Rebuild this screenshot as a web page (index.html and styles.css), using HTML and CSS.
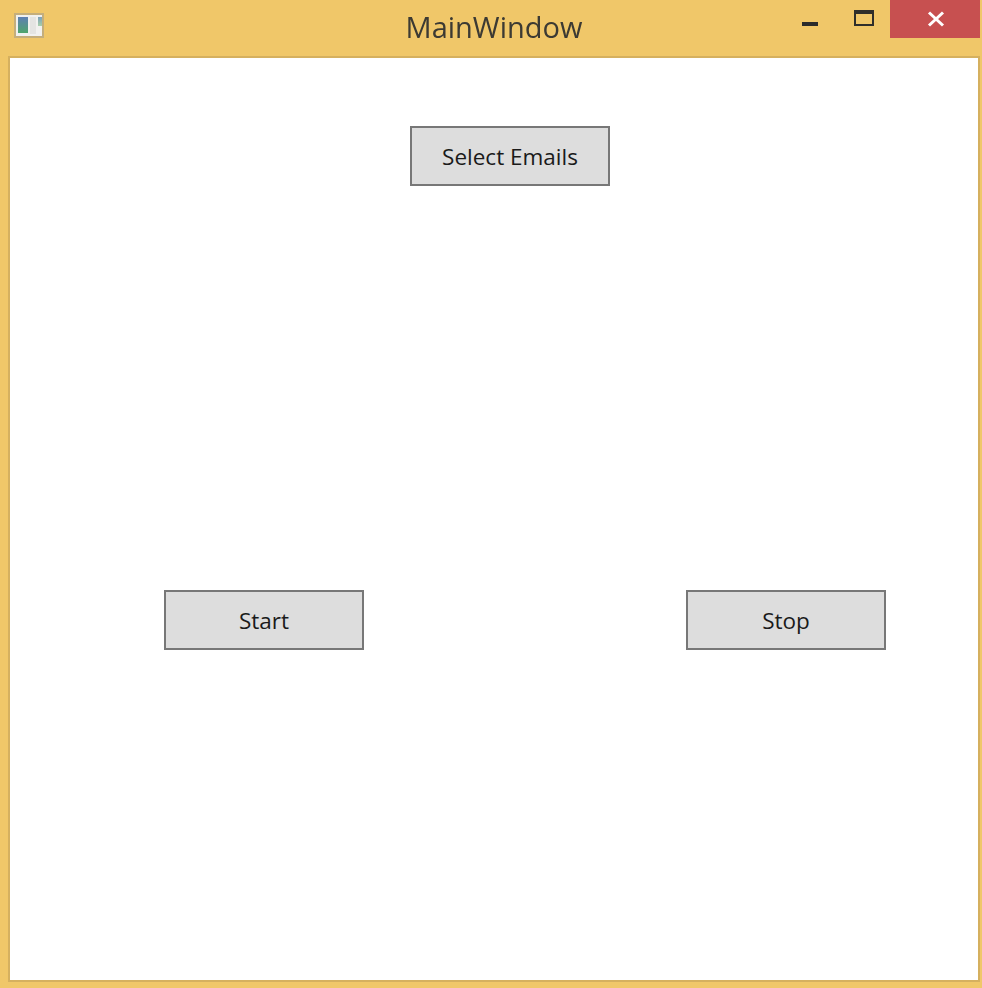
FILE: index.html
```html
<!DOCTYPE html>
<html lang="en">
<head>
<meta charset="utf-8">
<title>MainWindow</title>
<link rel="stylesheet" href="styles.css">
</head>
<body>
<div class="window">
  <header class="titlebar">
    <svg class="app-icon" width="32" height="28" viewBox="0 0 32 28">
      <defs>
        <linearGradient id="pane" x1="0" y1="0" x2="0" y2="1">
          <stop offset="0" stop-color="#5f7fb4"/>
          <stop offset="1" stop-color="#4fa56c"/>
        </linearGradient>
        <linearGradient id="side" x1="0" y1="0" x2="0" y2="1">
          <stop offset="0" stop-color="#7ca0bc"/>
          <stop offset="1" stop-color="#a8cfa8"/>
        </linearGradient>
      </defs>
      <rect x="1" y="2" width="28" height="23" fill="#f1f1ef" stroke="#c4ae7c" stroke-width="2"/>
      <rect x="4" y="5" width="10" height="16" fill="url(#pane)"/>
      <rect x="16" y="5" width="6" height="17" fill="#e4e4e2"/>
      <rect x="24" y="5" width="4" height="9" fill="url(#side)"/>
    </svg>
    <h1 class="title">MainWindow</h1>
    <div class="controls">
      <div class="control minimize"><span class="min-glyph"></span></div>
      <div class="control maximize"><span class="max-glyph"></span></div>
      <div class="control close">
        <svg width="18" height="16" viewBox="0 0 18 16"><path d="M2 1.5 16 14.5M16 1.5 2 14.5" stroke="#fff" stroke-width="3" fill="none"/></svg>
      </div>
    </div>
  </header>
  <main class="client">
    <div class="top-row"><button class="btn">Select Emails</button></div>
    <div class="bottom-row">
      <button class="btn">Start</button>
      <button class="btn">Stop</button>
    </div>
  </main>
</div>
</body>
</html>
```
FILE: styles.css
```css
* { box-sizing: border-box; }
html, body { margin: 0; height: 100%; }
body { background: #f0c769; font-family: "Open Sans", "Noto Sans", sans-serif; overflow: hidden; }
.window { width: 982px; height: 988px; display: flex; flex-direction: column; background: #f0c769; padding: 0 2px 6px 8px; }
.titlebar { height: 56px; flex: none; position: relative; display: flex; align-items: flex-start; margin-left: -8px; margin-right: -2px; }
.app-icon { position: absolute; left: 14px; top: 12px; filter: blur(0.5px); }
.title { margin: 0; width: 100%; text-align: center; font-size: 29px; font-weight: 400; line-height: 54px; color: #3c3a33; padding-left: 6px; filter: blur(0.3px); }
.controls { position: absolute; top: 0; right: 2px; display: flex; height: 38px; }
.control { display: flex; align-items: center; justify-content: center; height: 38px; }
.minimize { width: 54px; padding-left: 2px; }
.min-glyph { display: block; width: 16px; height: 4px; background: #2b2b2b; margin-top: 10px; }
.maximize { width: 54px; padding-left: 2px; }
.max-glyph { display: block; width: 20px; height: 16px; border: 2px solid #2f2e2a; border-top-width: 4px; margin-top: -2px; }
.close { width: 90px; background: #c75050; padding-left: 2px; }
.close svg { margin-top: 0; }
.client { flex: 1; background: #fff; border: 2px solid #d5b05f; padding: 68px 92px 0 154px; display: flex; flex-direction: column; }
.top-row { display: flex; padding-left: 246px; }
.bottom-row { display: flex; justify-content: space-between; margin-top: 404px; }
.btn { width: 200px; height: 60px; background: #dddddd; border: 2px solid #777777; font: inherit; font-size: 22.5px; color: #1a1a1a; padding: 0; }
```
